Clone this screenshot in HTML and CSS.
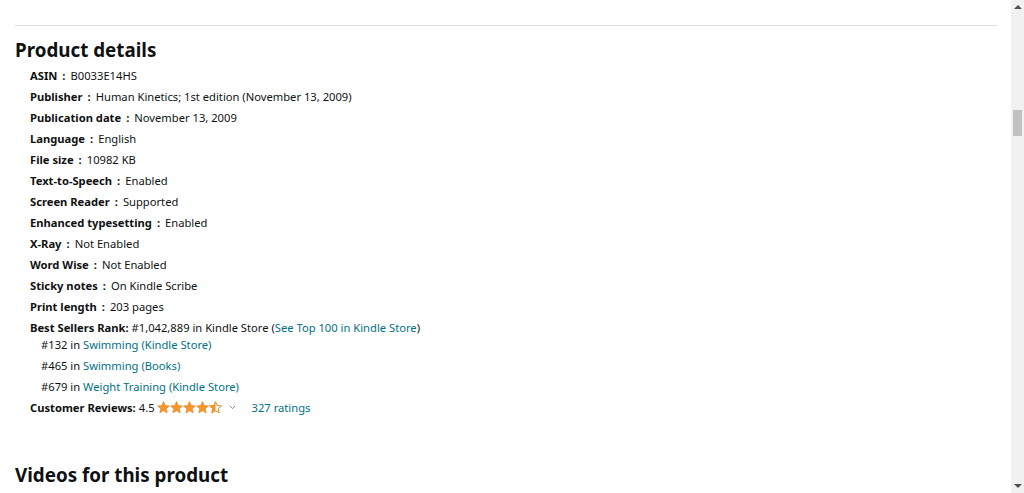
FILE: index.html
```html
<!DOCTYPE html>
<html lang="en">
<head>
    <meta charset="UTF-8">
    <meta name="viewport" content="width=device-width, initial-scale=1.0">
    <title>Product details</title>
    <link rel="stylesheet" href="styles.css">
</head>
<body>
    <div class="page">
        <div class="main">
            <hr class="divider">

            <!-- Product details -->
            <h2 class="section-title">Product details</h2>
            <ul class="detail-list">
                <li><span class="label">ASIN</span><span class="sep">:</span><span>B0033E14HS</span></li>
                <li><span class="label">Publisher</span><span class="sep">:</span><span>Human Kinetics; 1st edition (November 13, 2009)</span></li>
                <li><span class="label">Publication date</span><span class="sep">:</span><span>November 13, 2009</span></li>
                <li><span class="label">Language</span><span class="sep">:</span><span>English</span></li>
                <li><span class="label">File size</span><span class="sep">:</span><span>10982 KB</span></li>
                <li><span class="label">Text-to-Speech</span><span class="sep">:</span><span>Enabled</span></li>
                <li><span class="label">Screen Reader</span><span class="sep">:</span><span>Supported</span></li>
                <li><span class="label">Enhanced typesetting</span><span class="sep">:</span><span>Enabled</span></li>
                <li><span class="label">X-Ray</span><span class="sep">:</span><span>Not Enabled</span></li>
                <li><span class="label">Word Wise</span><span class="sep">:</span><span>Not Enabled</span></li>
                <li><span class="label">Sticky notes</span><span class="sep">:</span><span>On Kindle Scribe</span></li>
                <li><span class="label">Print length</span><span class="sep">:</span><span>203 pages</span></li>
            </ul>

            <div class="rank">
                <span class="label">Best Sellers Rank:</span> #1,042,889 in Kindle Store (<a href="#">See Top 100 in Kindle Store</a>)
                <ul class="rank-list">
                    <li>#132 in <a href="#">Swimming (Kindle Store)</a></li>
                    <li>#465 in <a href="#">Swimming (Books)</a></li>
                    <li>#679 in <a href="#">Weight Training (Kindle Store)</a></li>
                </ul>
            </div>

            <div class="reviews">
                <span class="label">Customer Reviews:</span>
                <span class="score">4.5</span>
                <svg class="stars" width="66" height="13" viewBox="0 0 66 13">
                    <defs>
                        <path id="star" d="M6.5 0.6 L8.3 4.5 L12.5 4.9 L9.3 7.7 L10.2 11.9 L6.5 9.7 L2.8 11.9 L3.7 7.7 L0.5 4.9 L4.7 4.5 Z"/>
                        <clipPath id="half"><rect x="0" y="0" width="6.5" height="13"/></clipPath>
                    </defs>
                    <use href="#star" x="0" fill="#f4962a" stroke="#e8851c" stroke-width="0.6"/>
                    <use href="#star" x="13" fill="#f4962a" stroke="#e8851c" stroke-width="0.6"/>
                    <use href="#star" x="26" fill="#f4962a" stroke="#e8851c" stroke-width="0.6"/>
                    <use href="#star" x="39" fill="#f4962a" stroke="#e8851c" stroke-width="0.6"/>
                    <g transform="translate(52 0)">
                        <use href="#star" fill="#fff" stroke="#e8851c" stroke-width="1"/>
                        <use href="#star" fill="#f4962a" clip-path="url(#half)"/>
                    </g>
                </svg>
                <svg class="chevron" width="7" height="5" viewBox="0 0 7 5">
                    <path d="M1 1 L3.5 3.6 L6 1" fill="none" stroke="#888" stroke-width="1"/>
                </svg>
                <a href="#" class="ratings">327 ratings</a>
            </div>

            <h2 class="section-title videos">Videos for this product</h2>
        </div>

        <!-- fake browser scrollbar -->
        <div class="scrollbar">
            <span class="arrow up"></span>
            <div class="track"><div class="thumb"></div></div>
            <span class="arrow down"></span>
        </div>
    </div>
</body>
</html>
```

FILE: styles.css
```css
html, body {
    margin: 0;
    padding: 0;
    height: 100%;
    overflow: hidden;
}
body {
    font-family: "Noto Sans", "Open Sans", Arial, sans-serif;
    font-size: 11.2px;
    color: #0f1111;
    background-color: #fff;
}
a {
    color: #007185;
    text-decoration: none;
}
.page {
    display: flex;
    height: 493px;
}
.main {
    flex: 1;
    padding: 0 14px 0 15px;
    overflow: hidden;
}
.divider {
    border: none;
    border-top: 1px solid #dddddd;
    margin: 25px 0 0 0;
}
.section-title {
    font-size: 18.8px;
    font-weight: 700;
    margin: 11px 0 1px 0;
    line-height: 27px;
}
.detail-list {
    list-style: none;
    margin: 0;
    padding: 0 0 0 15px;
}
.detail-list li {
    line-height: 21px;
    height: 21px;
}
.label {
    font-weight: 700;
}
.sep {
    font-weight: 700;
    margin: 0 5px 0 5px;
}
.rank {
    padding-left: 15px;
    line-height: 21px;
}
.rank-list {
    list-style: none;
    margin: -4px 0 0 0;
    padding: 0 0 0 11px;
}
.rank-list li {
    line-height: 21px;
}
.reviews {
    padding-left: 15px;
    line-height: 21px;
    display: flex;
    align-items: center;
}
.score {
    margin-left: 3px;
    margin-right: 2px;
}
.stars {
    display: block;
}
.chevron {
    margin-left: 6px;
    margin-right: 16px;
}
.videos {
    margin-top: 44px;
}
.scrollbar {
    width: 13px;
    background-color: #f1f1f1;
    display: flex;
    flex-direction: column;
    align-items: center;
}
.arrow {
    width: 0;
    height: 0;
    border-left: 4px solid transparent;
    border-right: 4px solid transparent;
}
.arrow.up {
    border-bottom: 4px solid #505050;
    margin: 5px 0 6px 0;
}
.arrow.down {
    border-top: 4px solid #505050;
    margin: 6px 0 5px 0;
}
.track {
    flex: 1;
    width: 100%;
}
.thumb {
    width: 9px;
    height: 26px;
    margin: 95px auto 0 auto;
    background-color: #c1c1c1;
}
```
